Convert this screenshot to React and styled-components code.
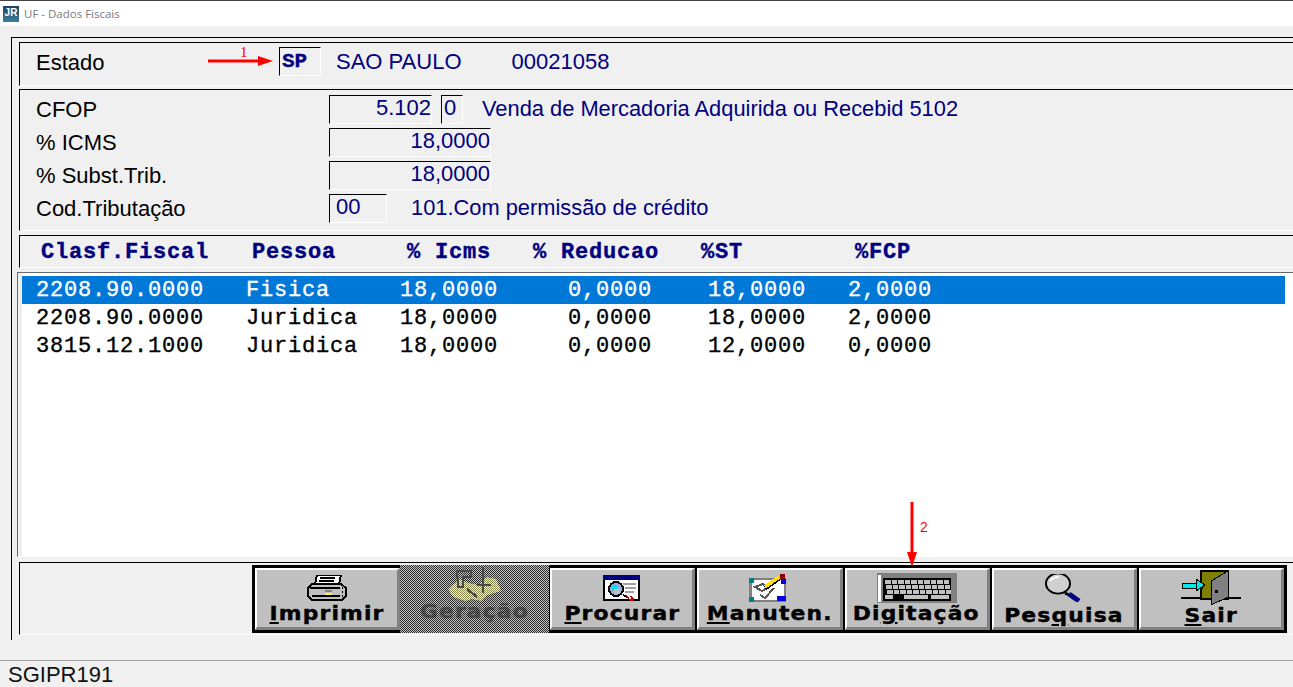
import styled, { createGlobalStyle, css } from "styled-components";

const rows = [
    { code: "2208.90.0000", pessoa: "Fisica", icms: "18,0000", reducao: "0,0000", st: "18,0000", fcp: "2,0000", selected: true },
    { code: "2208.90.0000", pessoa: "Juridica", icms: "18,0000", reducao: "0,0000", st: "18,0000", fcp: "2,0000" },
    { code: "3815.12.1000", pessoa: "Juridica", icms: "18,0000", reducao: "0,0000", st: "12,0000", fcp: "0,0000" },
];

function PrinterIcon() {
    return (
        <svg width="40" height="26" viewBox="0 0 40 26" shapeRendering="crispEdges">
            <path d="M10 0h24l-2 9H8z" fill="#fff" stroke="#000" strokeWidth="2" />
            <path d="M13 3h15M12 6h15" stroke="#000" strokeWidth="1.5" />
            <path d="M5 9h29l5 4v8l-4 4H5l-4-4v-8z" fill="#c0c0c0" stroke="#000" strokeWidth="2" />
            <path d="M3 13h30M5 21h28" stroke="#000" strokeWidth="2" />
            <rect x="18" y="15" width="7" height="2" fill="#808080" />
            <rect x="18" y="18" width="7" height="2" fill="#ffff00" />
            <path d="M35 12v10" stroke="#000" strokeWidth="1" strokeDasharray="2 2" />
        </svg>
    );
}

function GeracaoIcon() {
    return (
        <svg width="56" height="38" viewBox="0 0 56 38" shapeRendering="crispEdges">
            <defs>
                <pattern id="dither" width="2" height="2" patternUnits="userSpaceOnUse">
                    <rect width="2" height="2" fill="#f4f488" />
                    <rect width="1" height="1" fill="#8c8c50" />
                    <rect x="1" y="1" width="1" height="1" fill="#8c8c50" />
                </pattern>
            </defs>
            <path d="M1 22l12-10 8 4 10 2 8-8 10 2 5 12-14 4-6 6-10-2-6 2-12-4z" fill="url(#dither)" />
            <path d="M10 4h14v6H16v10h-5z" fill="none" stroke="#4a4a4a" strokeWidth="2" />
            <path d="M36 0v26M30 18h14M20 22l10 8" stroke="#4a4a4a" strokeWidth="2.5" />
        </svg>
    );
}

function ProcurarIcon() {
    return (
        <svg width="38" height="27" viewBox="0 0 38 27" shapeRendering="crispEdges">
            <rect x="1" y="1" width="35" height="24" fill="#fff" stroke="#000" strokeWidth="2" />
            <rect x="0" y="0" width="37" height="5" fill="#000080" />
            <path d="M20 9h13M22 13h11M22 17h9" stroke="#a0a0a0" strokeWidth="2" />
            <circle cx="13" cy="14" r="7" fill="#9ad" stroke="#000" strokeWidth="2" />
            <rect x="9" y="10" width="5" height="5" fill="#00e0e0" />
            <rect x="11" y="14" width="6" height="5" fill="#c0c0c0" />
            <path d="M20 20l4 2" stroke="#000" strokeWidth="2" />
            <path d="M23 20l3 2 2-1 3 3 -1 2h-3l-4-4z" fill="#d00000" />
            <rect x="26" y="22" width="2" height="2" fill="#fff" />
        </svg>
    );
}

function ManutenIcon() {
    return (
        <svg width="40" height="29" viewBox="0 0 40 29" shapeRendering="crispEdges">
            <rect x="0" y="4" width="37" height="24" fill="#808080" />
            <rect x="3" y="6" width="32" height="20" fill="#fff" />
            <rect x="0" y="4" width="5" height="5" fill="#008080" />
            <rect x="0" y="23" width="5" height="5" fill="#008080" />
            <rect x="32" y="5" width="5" height="5" fill="#0000e0" />
            <rect x="28" y="22" width="9" height="5" fill="#0000e0" />
            <path d="M6 13l7 4 5-3-4-4zM11 21l5 3 9-10" fill="none" stroke="#555" strokeWidth="2" />
            <path d="M16 14L30 4" stroke="#000" strokeWidth="5" />
            <path d="M16 13L30 3" stroke="#ffe000" strokeWidth="3.5" />
            <rect x="31" y="0" width="5" height="5" fill="#8b0000" />
        </svg>
    );
}

function KeyboardIcon() {
    return (
        <svg width="80" height="30" viewBox="0 0 80 30" shapeRendering="crispEdges">
            <rect x="0" y="0" width="80" height="30" fill="#808080" />
            <rect x="1" y="2" width="3" height="27" fill="#fff" />
            <rect x="6" y="5" width="68" height="23" fill="#000" />
            {[0, 1, 2].map(r =>
                Array.from({ length: 10 }).map((_, i) => (
                    <rect key={r + "-" + i} x={8 + i * 6.5 + r} y={7 + r * 5} width="5.5" height="4" fill="#c0c0c0" />
                ))
            )}
            <rect x="8" y="22" width="8" height="4" fill="#c0c0c0" />
            <rect x="27" y="22" width="24" height="4" fill="#c0c0c0" />
            <rect x="54" y="22" width="18" height="4" fill="#c0c0c0" />
        </svg>
    );
}

function LensIcon() {
    return (
        <svg width="38" height="28" viewBox="0 0 38 28">
            <circle cx="13" cy="10" r="12" fill="#d0d0d0" stroke="#000" strokeWidth="2" transform="translate(0 1) scale(1 .85)" />
            <path d="M5 7c2-3 5-4 9-4" fill="none" stroke="#fff" strokeWidth="2" />
            <path d="M20 19l4 2" stroke="#000" strokeWidth="3" />
            <path d="M24 20l10 7" stroke="#000080" strokeWidth="5" />
        </svg>
    );
}

function DoorIcon() {
    return (
        <svg width="60" height="36" viewBox="0 0 60 36" shapeRendering="crispEdges">
            <rect x="20" y="1" width="27" height="28" fill="#808000" stroke="#000" strokeWidth="2" />
            <path d="M30 11l17-10v26l-17 8z" fill="#808080" stroke="#000" strokeWidth="1" />
            <rect x="34" y="20" width="3" height="3" fill="#000" />
            <path d="M0 28h20M47 28h13" stroke="#000" strokeWidth="2" />
            <rect x="1" y="13" width="20" height="5" fill="#00e8e8" stroke="#000" strokeWidth="1" />
            <path d="M15 9l9 6-9 6z" fill="#00e8e8" stroke="#000" strokeWidth="1" />
        </svg>
    );
}

export default function App() {
    return (
        <Page>
            <GlobalStyle />
            <TitleBar>
                <TitleLogo>JR</TitleLogo>
                <TitleText>UF - Dados Fiscais</TitleText>
            </TitleBar>

            <Body>
                <Frame>
                    <EstadoPanel>
                        <Label $width="243px">Estado</Label>
                        <CodeBox>SP</CodeBox>
                        <Value $left="15px">SAO PAULO</Value>
                        <Value $left="50px">00021058</Value>
                    </EstadoPanel>

                    <FieldsPanel>
                        <FieldRow>
                            <Label>CFOP</Label>
                            <Field $width="103px" $right>5.102</Field>
                            <Field $width="22px" $left="9px">0</Field>
                            <Description $left="19px">Venda de Mercadoria Adquirida ou Recebid 5102</Description>
                        </FieldRow>
                        <FieldRow>
                            <Label>% ICMS</Label>
                            <Field $width="162px" $right>18,0000</Field>
                        </FieldRow>
                        <FieldRow>
                            <Label>% Subst.Trib.</Label>
                            <Field $width="162px" $right>18,0000</Field>
                        </FieldRow>
                        <FieldRow>
                            <Label>Cod.Tributação</Label>
                            <Field $width="58px" $indent>00</Field>
                            <Description $left="24px">101.Com permissão de crédito</Description>
                        </FieldRow>
                    </FieldsPanel>

                    <HeaderPanel>
                        <HeadCell $width="211px">Clasf.Fiscal</HeadCell>
                        <HeadCell $width="155px">Pessoa</HeadCell>
                        <HeadCell $width="126px">% Icms</HeadCell>
                        <HeadCell $width="168px">% Reducao</HeadCell>
                        <HeadCell $width="154px">%ST</HeadCell>
                        <HeadCell>%FCP</HeadCell>
                    </HeaderPanel>

                    <List>
                        {rows.map((r, i) => (
                            <Row key={i} $selected={r.selected}>
                                <Cell $width="210px">{r.code}</Cell>
                                <Cell $width="154px">{r.pessoa}</Cell>
                                <Cell $width="98px" $right>{r.icms}</Cell>
                                <Cell $width="154px" $right>{r.reducao}</Cell>
                                <Cell $width="154px" $right>{r.st}</Cell>
                                <Cell $width="126px" $right>{r.fcp}</Cell>
                            </Row>
                        ))}
                    </List>

                    <ToolPanel>
                        <Toolbar>
                            <ToolButton>
                                <IconSlot><PrinterIcon /></IconSlot>
                                <ToolLabel><u>I</u>mprimir</ToolLabel>
                            </ToolButton>
                            <ToolButton $disabled>
                                <IconSlot><GeracaoIcon /></IconSlot>
                                <ToolLabel>Geração</ToolLabel>
                            </ToolButton>
                            <ToolButton>
                                <IconSlot><ProcurarIcon /></IconSlot>
                                <ToolLabel><u>P</u>rocurar</ToolLabel>
                            </ToolButton>
                            <ToolButton>
                                <IconSlot><ManutenIcon /></IconSlot>
                                <ToolLabel><u>M</u>anuten.</ToolLabel>
                            </ToolButton>
                            <ToolButton>
                                <IconSlot><KeyboardIcon /></IconSlot>
                                <ToolLabel>Di<u>g</u>itação</ToolLabel>
                            </ToolButton>
                            <ToolButton>
                                <IconSlot><LensIcon /></IconSlot>
                                <ToolLabel $low>Pes<u>q</u>uisa</ToolLabel>
                            </ToolButton>
                            <ToolButton>
                                <IconSlot><DoorIcon /></IconSlot>
                                <ToolLabel $low><u>S</u>air</ToolLabel>
                            </ToolButton>
                        </Toolbar>
                    </ToolPanel>
                </Frame>
            </Body>

            <StatusBar>SGIPR191</StatusBar>

            <ArrowOne width="66" height="12" viewBox="0 0 66 12">
                <path d="M0 6h52" stroke="#f00" strokeWidth="3" />
                <path d="M50 1l15 5-15 5z" fill="#f00" />
            </ArrowOne>
            <NoteOne>1</NoteOne>
            <ArrowTwo width="12" height="65" viewBox="0 0 12 65">
                <path d="M6 0v52" stroke="#f00" strokeWidth="3" />
                <path d="M1 50l5 15 5-15z" fill="#f00" />
            </ArrowTwo>
            <NoteTwo>2</NoteTwo>
        </Page>
    );
}

const GlobalStyle = createGlobalStyle`
    html, body {
        margin: 0;
        padding: 0;
        background: #f0f0f0;
    }
`

const sunken = css`
    box-sizing: border-box;
    border-top: 1px solid #000;
    border-left: 1px solid #000;
    border-bottom: 1px solid #fff;
    border-right: 1px solid #fff;
`

const Page = styled.div`
    position: relative;
    width: 1293px;
    height: 687px;
    overflow: hidden;
    display: flex;
    flex-direction: column;
    background: #f0f0f0;
    font-family: "Liberation Sans", Arial, sans-serif;
`

const TitleBar = styled.div`
    box-sizing: border-box;
    height: 26px;
    flex-shrink: 0;
    display: flex;
    align-items: center;
    padding-left: 3px;
    gap: 5px;
    background: #fff;
    border-top: 1px solid #444;
`

const TitleLogo = styled.div`
    width: 16px;
    height: 16px;
    background: linear-gradient(#1f3f5f, #3f7f9f);
    color: #fff;
    font-size: 10px;
    font-weight: 700;
    line-height: 14px;
    text-align: center;
`

const TitleText = styled.span`
    font-family: "Open Sans", sans-serif;
    font-size: 11.5px;
    color: #7a7a7a;
`

const Body = styled.div`
    flex: 1;
    padding: 11px 0 0 11px;
`

const Frame = styled.div`
    box-sizing: border-box;
    width: 1300px;
    height: 603px;
    padding: 4px 0 0 7px;
    border-top: 1px solid #000;
    border-left: 1px solid #000;
`

const EstadoPanel = styled.div`
    ${sunken};
    height: 44px;
    display: flex;
    align-items: flex-start;
    padding: 4px 0 0 16px;
`

const Label = styled.span`
    width: ${p => p.$width || "293px"};
    flex-shrink: 0;
    font-size: 22px;
    line-height: 31px;
    color: #000;
`

const Value = styled.span`
    margin-left: ${p => p.$left || "0"};
    font-size: 22px;
    line-height: 30px;
    color: #000080;
    white-space: pre;
`

const Description = styled(Value)`
    margin-bottom: 2px;
    font-size: 21.85px;
`

const CodeBox = styled.div`
    ${sunken};
    width: 42px;
    height: 29px;
    padding-left: 2px;
    font-family: "Liberation Mono", monospace;
    font-weight: 700;
    font-size: 21px;
    line-height: 27px;
    -webkit-text-stroke: 0.3px #000080;
    color: #000080;
`

const FieldsPanel = styled.div`
    ${sunken};
    height: 142px;
    margin-top: 3px;
    padding: 5px 0 0 16px;
    display: flex;
    flex-direction: column;
    gap: 4px;
`

const FieldRow = styled.div`
    height: 29px;
    display: flex;
    align-items: center;
`

const Field = styled.div`
    ${sunken};
    width: ${p => p.$width};
    height: 29px;
    margin-left: ${p => p.$left || "0"};
    padding: 0 ${p => (p.$right ? "0" : "2px")} 0 ${p => (p.$indent ? "6px" : "2px")};
    text-align: ${p => (p.$right ? "right" : "left")};
    font-size: 22px;
    line-height: 24px;
    color: #000080;
`

const HeaderPanel = styled.div`
    ${sunken};
    height: 33px;
    margin-top: 4px;
    padding: 2px 0 0 21px;
    display: flex;
    align-items: center;
`

const HeadCell = styled.span`
    width: ${p => p.$width || "auto"};
    flex-shrink: 0;
    font-family: "Liberation Mono", monospace;
    font-weight: 700;
    font-size: 22px;
    letter-spacing: 0.8px;
    -webkit-text-stroke: 0.4px #000080;
    color: #000080;
    white-space: pre;
`

const List = styled.div`
    box-sizing: border-box;
    height: 285px;
    margin: 4px 0 0 -2px;
    padding-top: 3px;
    border-top: 1px solid #696969;
    border-left: 1px solid #696969;
    border-bottom: 1px solid #fff;
    background: linear-gradient(#f0f0f0, #f0f0f0) left / 4px 100% no-repeat, #fff;
`

const Row = styled.div`
    width: 1263px;
    height: 28px;
    margin-left: 4px;
    padding: 1px 0 0 14px;
    box-sizing: border-box;
    display: flex;
    align-items: center;
    font-family: "Liberation Mono", monospace;
    font-size: 22px;
    letter-spacing: 0.8px;
    -webkit-text-stroke: 0.35px currentColor;
    color: ${p => (p.$selected ? "#fff" : "#000")};
    background: ${p => (p.$selected ? "#0078d7" : "transparent")};
`

const Cell = styled.span`
    width: ${p => p.$width};
    flex-shrink: 0;
    text-align: ${p => (p.$right ? "right" : "left")};
    white-space: pre;
`

const ToolPanel = styled.div`
    ${sunken};
    height: 73px;
    margin-top: 5px;
    padding: 2px 0 0 232px;
`

const Toolbar = styled.div`
    box-sizing: border-box;
    width: 1035px;
    height: 68px;
    padding: 3px;
    display: flex;
    gap: 2px;
    background: #000;
`

const IconSlot = styled.div`
    height: 36px;
    display: flex;
    align-items: center;
    justify-content: center;

    svg {
        display: block;
    }
`

const ToolLabel = styled.span`
    margin-top: ${p => (p.$low ? "-1px" : "-3px")};
    font-family: "DejaVu Sans", sans-serif;
    font-weight: 700;
    font-size: 19px;
    line-height: 20px;
    letter-spacing: 1px;
    color: #000;
    white-space: pre;
    transform: scaleX(1.15);
    -webkit-text-stroke: 0.4px currentColor;

    u {
        text-decoration-thickness: 2px;
        text-underline-offset: 2px;
    }
`

const ToolButton = styled.div`
    position: relative;
    box-sizing: border-box;
    flex: 1;
    display: flex;
    flex-direction: column;
    align-items: center;
    overflow: hidden;
    background: #c0c0c0;
    border-top: 2px solid #fff;
    border-left: 2px solid #fff;
    border-bottom: 3px solid #808080;
    border-right: 3px solid #808080;

    ${p => p.$disabled && css`
        flex: none;
        width: 149px;
        margin: -3px -1px -3px -2px;
        padding-top: 3px;
        border: none;

        &::after {
            content: "";
            position: absolute;
            inset: 0;
            background: repeating-conic-gradient(#2c2c2c 0 25%, transparent 0 50%) 0 0 / 2px 2px;
        }

        ${IconSlot} {
            position: relative;
            z-index: 1;
        }

        ${ToolLabel} {
            color: #686868;
        }
    `}
`

const StatusBar = styled.div`
    box-sizing: border-box;
    height: 27px;
    flex-shrink: 0;
    padding-left: 8px;
    border-top: 1px solid #a0a0a0;
    font-size: 22px;
    line-height: 27px;
    color: #111;
`

const ArrowOne = styled.svg`
    position: absolute;
    left: 208px;
    top: 55px;
`

const ArrowTwo = styled.svg`
    position: absolute;
    left: 906px;
    top: 502px;
`

const NoteOne = styled.span`
    position: absolute;
    left: 240px;
    top: 44px;
    font-family: "Liberation Serif", serif;
    font-size: 15px;
    color: #f00;
`

const NoteTwo = styled.span`
    position: absolute;
    left: 920px;
    top: 519px;
    font-size: 14px;
    color: #f00;
`
